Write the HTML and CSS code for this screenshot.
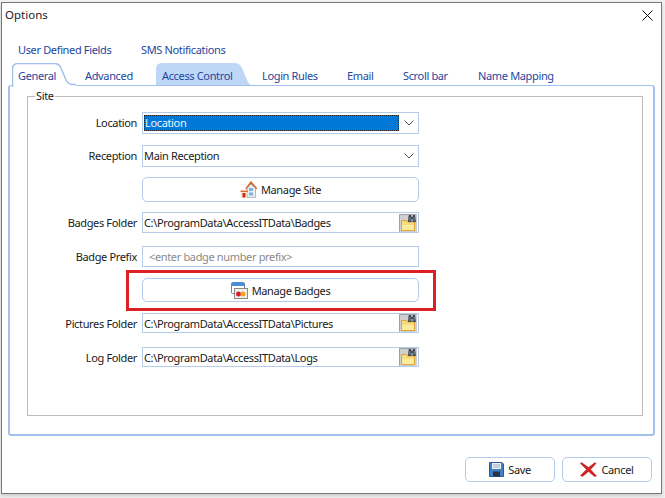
FILE: index.html
```html
<!DOCTYPE html>
<html lang="en">
<head>
	<meta charset="UTF-8">
	<title>Options</title>
	<link rel="stylesheet" href="styles.css">
</head>
<body>
<svg class="defs" width="0" height="0">
	<defs>
		<symbol id="folder" viewBox="0 0 18 18">
			<rect width="18" height="18" fill="#cfcfcf"/>
			<path d="M0.500 17.500V0.500H17.500" fill="none" stroke="#a0a0a0"/>
			<path d="M2.500 8V6.500H7.500L8.500 8H15.500V16.500H2.500z" fill="#f6dc7c" stroke="#dfa53a"/>
			<path d="M3 11H15V16H3z" fill="#fbeb9c"/>
			<path d="M9.500 2L10 1H12L12.500 3H13.500L14 1H16L17 8H13.500V5H12.500V8H9z" fill="#3f4953"/>
			<path d="M10.500 3H11.500V7H10.500zM14.500 3H15.500V7H14.500z" fill="#7d8894"/>
		</symbol>
	</defs>
</svg>
<div class="window">
	<div class="titlebar">
		<span class="title">Options</span>
		<svg class="close" width="11" height="11" viewBox="0 0 11 11"><path d="M0.500 0.500L10.500 10.500M10.500 0.500L0.500 10.500" stroke="#111" stroke-width="1"/></svg>
	</div>

	<div class="tabs-top">
		<span class="tab">User Defined Fields</span>
		<span class="tab">SMS Notifications</span>
	</div>
	<div class="tabs">
		<span class="tab active">
			<svg class="tab-shape" width="64" height="24" viewBox="0 0 64 24"><path d="M0.500 24V6Q0.500 0.500 6 0.500H42Q47 0.500 49 5L54 17Q56 21.500 61 21.500H64V24z" fill="#fff" stroke="none"/><path d="M0.500 24V6Q0.500 0.500 6 0.500H42Q47 0.500 49 5L54 17Q56 21.500 61 21.500H64" fill="none" stroke="#a3c0ea" stroke-width="1.500"/></svg>
			<b>General</b>
		</span>
		<span class="tab">Advanced</span>
		<span class="tab">
			<svg class="tab-shape" width="96" height="22" viewBox="0 0 96 22"><path d="M0 22V6Q0 0 6 0H78Q84 0 86 5L91 17Q93 22 96 22z" fill="#bfd7f6"/></svg>
			<b>Access Control</b>
		</span>
		<span class="tab">Login Rules</span>
		<span class="tab">Email</span>
		<span class="tab">Scroll bar</span>
		<span class="tab">Name Mapping</span>
	</div>

	<div class="pane">
		<fieldset class="group">
			<legend>Site</legend>
			<div class="form">
				<label>Location</label>
				<div class="field select h22">
					<span class="selected">Location</span>
					<svg class="chevron" width="10" height="6" viewBox="0 0 10 6"><path d="M0.500 0.500L5 5L9.500 0.500" fill="none" stroke="#555"/></svg>
				</div>

				<label>Reception</label>
				<div class="field select h22">
					<span class="value raised">Main Reception</span>
					<svg class="chevron" width="10" height="6" viewBox="0 0 10 6"><path d="M0.500 0.500L5 5L9.500 0.500" fill="none" stroke="#555"/></svg>
				</div>

				<span></span>
				<button class="btn h25">
					<svg width="17" height="17" viewBox="0 0 17 17">
						<path d="M6 8L11 1.500L16.500 8" fill="none" stroke="#d9632a" stroke-width="2"/>
						<path d="M7 7.500L11 3L15.500 7.500V16.500H7z" fill="#e9edf0" stroke="#9aa3aa" stroke-width="0.700"/>
						<path d="M9 7h4v3H9zM9 11.500h4v3H9z" fill="#7fb2d8"/>
						<path d="M0.500 9.500H8V11H0.500z" fill="#e0702f"/>
						<path d="M1 11h6v5.500H1z" fill="#f3e5d0"/>
						<path d="M2.500 12h3v4.500h-3z" fill="#c8321c"/>
					</svg>
					Manage Site
				</button>

				<label>Badges Folder</label>
				<div class="field path h21">
					<span class="value">C:\ProgramData\AccessITData\Badges</span>
					<svg class="browse" width="18" height="18"><use href="#folder"/></svg>
				</div>

				<label>Badge Prefix</label>
				<div class="field h21">
					<span class="hint">&lt;enter badge number prefix&gt;</span>
				</div>

				<span></span>
				<button class="btn h24">
					<svg width="17" height="17" viewBox="0 0 17 17">
						<rect x="0.500" y="0.500" width="13" height="11" rx="1" fill="#fff" stroke="#5b87bd"/>
						<rect x="1" y="1" width="12" height="3" fill="#4a90d9"/>
						<rect x="3.500" y="6.500" width="13" height="10" fill="#f1f1ee" stroke="#8a8a8a"/>
						<circle cx="7.500" cy="12" r="2.500" fill="#d5202e"/>
						<circle cx="12" cy="12" r="2.500" fill="#f2a51e"/>
					</svg>
					Manage Badges
				</button>

				<label>Pictures Folder</label>
				<div class="field path h20">
					<span class="value">C:\ProgramData\AccessITData\Pictures</span>
					<svg class="browse" width="18" height="18"><use href="#folder"/></svg>
				</div>

				<label>Log Folder</label>
				<div class="field path h20">
					<span class="value">C:\ProgramData\AccessITData\Logs</span>
					<svg class="browse" width="18" height="18"><use href="#folder"/></svg>
				</div>
				<div class="callout"></div>
			</div>
		</fieldset>
	</div>

	<div class="actions">
		<button class="btn">
			<svg width="15" height="15" viewBox="0 0 15 15">
				<path d="M0.500 0.500H13L14.500 2V14.500H0.500z" fill="#3f7fc4" stroke="#2a5d99"/>
				<rect x="3" y="1" width="9" height="6" fill="#e9eef3"/>
				<path d="M4 3h7M4 5h7" stroke="#9fb2c6"/>
				<rect x="4" y="9.500" width="7" height="5" fill="#2b3440"/>
			</svg>
			Save
		</button>
		<button class="btn">
			<svg width="17" height="15" viewBox="0 0 17 15">
				<path d="M1.500 0.500L8.500 5.500L15 0.500L16 1.500L10.500 7.500L16.500 14L14.500 14.500L8.500 9.500L2.500 14.500L0.500 13.500L6.500 7.500L0.500 1.500z" fill="#d3221f" stroke="#a91a18" stroke-width="0.500"/>
			</svg>
			Cancel
		</button>
	</div>
</div>
</body>
</html>
```

FILE: styles.css
```css
* {
  box-sizing: border-box;
}
html, body {
  margin: 0;
  height: 100%;
}
body {
  font-family: "Noto Sans", Arial, sans-serif;
  font-size: 11px;
  letter-spacing: -0.35px;
  color: #1a1a1a;
  background-color: #f0f0f0;
  overflow: hidden;
}
.defs {
  display: block;
}
.window {
  display: flex;
  flex-direction: column;
  width: 661px;
  height: 492px;
  margin: 2px 0 0 1px;
  background-color: white;
  border: 1px solid #777;
  box-shadow: 0 2px 3px rgba(0, 0, 0, 0.15);
}
.titlebar {
  display: flex;
  justify-content: space-between;
  height: 36px;
  padding: 4px 8px 0 3px;
}
.title {
  line-height: 16px;
  font-size: 11.5px;
  letter-spacing: 0;
}
.close {
  margin-top: 3px;
}
.tab {
  position: relative;
  display: block;
  padding-left: 6px;
  color: #2546a0;
  white-space: nowrap;
}
.tab b {
  position: relative;
  font-weight: normal;
}
.tabs-top {
  display: grid;
  grid-template-columns: 123px auto;
  justify-content: start;
  height: 24px;
  padding: 3px 0 0 10px;
  line-height: 16px;
}
.tabs {
  display: grid;
  grid-template-columns: 67px 77px 100px 85px 56px 75px auto;
  justify-content: start;
  height: 22px;
  padding-left: 10px;
  line-height: 26px;
}
.tab-shape {
  position: absolute;
  left: 0;
  top: 0;
  display: block;
}
.tab.active {
  z-index: 2;
}
.pane {
  width: 647px;
  height: 351px;
  margin-left: 6px;
  padding: 3px 10px 0 17px;
  border: 2px solid #a3c0ea;
  border-top-width: 1px;
  border-radius: 3px;
}
.group {
  height: 327px;
  margin: 0;
  padding: 0;
  border: 1px solid #bbb;
  min-width: 0;
}
.group legend {
  margin-left: 7px;
  padding: 0 1px;
  line-height: 14px;
}
.form {
  position: relative;
  display: grid;
  grid-template-columns: 113px 277px;
  grid-template-rows: 33px 32px 35px 34px 32px 35px 34px 20px;
  column-gap: 1px;
  align-items: start;
  margin-top: 9px;
}
.form label {
  height: 22px;
  padding-right: 4px;
  line-height: 22px;
  text-align: right;
  white-space: nowrap;
}
.field {
  display: flex;
  align-items: center;
  justify-content: space-between;
  width: 277px;
  padding: 0 1px;
  background-color: white;
  border: 1px solid #b4cbe9;
}
.h20 { height: 20px; }
.h21 { height: 21px; }
.h22 { height: 22px; }
.h24 { height: 24px; }
.h25 { height: 25px; }
.select {
  padding-right: 4px;
}
.selected {
  flex: none;
  width: 255px;
  height: 16px;
  padding-left: 1px;
  line-height: 15px;
  color: #eaf4ff;
  background-color: #0078d7;
  outline: 1px dotted #222;
  outline-offset: -1px;
}
.value {
  white-space: nowrap;
}
.raised {
  margin-bottom: 2px;
}
.hint {
  padding-left: 5px;
  color: #8a8a8a;
}
.browse {
  flex: none;
}
.btn {
  display: flex;
  align-items: center;
  justify-content: center;
  gap: 4px;
  width: 277px;
  padding: 0;
  font: inherit;
  letter-spacing: inherit;
  color: inherit;
  background-color: white;
  border: 1px solid #b4cbe9;
  border-radius: 5px;
}
.callout {
  position: absolute;
  left: 98px;
  top: 158px;
  width: 310px;
  height: 41px;
  border: 3px solid #dd1f26;
}
.actions {
  display: flex;
  justify-content: flex-end;
  gap: 7px;
  padding: 21px 9px 0 0;
}
.actions .btn {
  width: 90px;
  height: 25px;
}
```
